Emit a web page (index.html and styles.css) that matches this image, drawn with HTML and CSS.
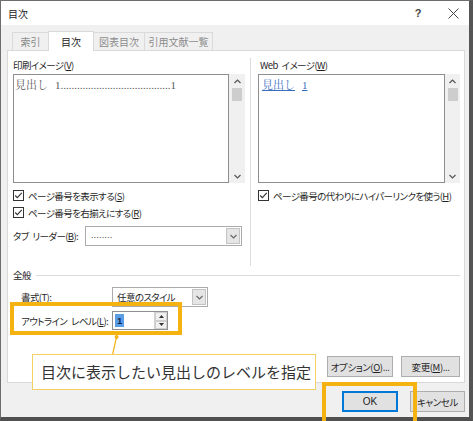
FILE: index.html
```html
<!DOCTYPE html>
<html lang="ja">
<head>
<meta charset="utf-8">
<title>目次</title>
<link rel="stylesheet" href="styles.css">
</head>
<body>
<div class="screen">
  <div class="window">
    <div class="titlebar">
      <span class="title">目次</span>
      <span class="tb-btn help">?</span>
      <span class="tb-btn close"><svg width="11" height="11" viewBox="0 0 11 11"><path d="M0.5 0.5 L10.5 10.5 M10.5 0.5 L0.5 10.5" stroke="#444" stroke-width="1"/></svg></span>
    </div>
    <div class="body">
      <div class="tabs">
        <div class="tab t1">索引</div>
        <div class="tab t2 active">目次</div>
        <div class="tab t3">図表目次</div>
        <div class="tab t4">引用文献一覧</div>
      </div>
      <div class="panel">
        <div class="columns">
          <div class="col col-left">
            <div class="label">印刷イメージ(<u>V</u>)</div>
            <div class="preview">
              <div class="preview-box"><span class="print-line">見出し<span class="sp"></span>1........................................1</span></div>
              <div class="scrollbar sb-left">
                <span class="sb-arrow"><svg width="7" height="5" viewBox="0 0 7 5"><path d="M0.5 4 L3.5 1 L6.5 4" fill="none" stroke="#555" stroke-width="1.2"/></svg></span>
                <span class="sb-thumb"></span>
                <span class="sb-space"></span>
                <span class="sb-arrow"><svg width="7" height="5" viewBox="0 0 7 5"><path d="M0.5 1 L3.5 4 L6.5 1" fill="none" stroke="#555" stroke-width="1.2"/></svg></span>
              </div>
            </div>
            <div class="check first">
              <svg class="cb" width="11" height="11" viewBox="0 0 11 11"><rect x="0.5" y="0.5" width="10" height="10" fill="#fff" stroke="#333"/><path d="M2.2 5.5 L4.3 7.7 L8.8 2.8" fill="none" stroke="#333" stroke-width="1.1"/></svg>
              <span>ページ番号を表示する(<u>S</u>)</span>
            </div>
            <div class="check">
              <svg class="cb" width="11" height="11" viewBox="0 0 11 11"><rect x="0.5" y="0.5" width="10" height="10" fill="#fff" stroke="#333"/><path d="M2.2 5.5 L4.3 7.7 L8.8 2.8" fill="none" stroke="#333" stroke-width="1.1"/></svg>
              <span>ページ番号を右揃えにする(<u>R</u>)</span>
            </div>
            <div class="leader-row">
              <span class="leader-label">タブ<span class="gap"></span>リーダー(<u>B</u>):</span>
              <div class="select leader-select">
                <span class="select-text dots">........</span>
                <span class="select-btn"><svg width="7" height="5" viewBox="0 0 7 5"><path d="M0.5 1 L3.5 4 L6.5 1" fill="none" stroke="#666" stroke-width="1.1"/></svg></span>
              </div>
            </div>
          </div>
          <div class="divider"></div>
          <div class="col col-right">
            <div class="label web-label">Web<span class="gap"></span>イメージ(<u>W</u>)</div>
            <div class="preview">
              <div class="preview-box"><span class="web-link">見出し<span class="sp"></span>1</span></div>
              <div class="scrollbar sb-right">
                <span class="sb-arrow"><svg width="7" height="5" viewBox="0 0 7 5"><path d="M0.5 4 L3.5 1 L6.5 4" fill="none" stroke="#555" stroke-width="1.2"/></svg></span>
                <span class="sb-thumb"></span>
                <span class="sb-space"></span>
                <span class="sb-arrow"><svg width="7" height="5" viewBox="0 0 7 5"><path d="M0.5 1 L3.5 4 L6.5 1" fill="none" stroke="#555" stroke-width="1.2"/></svg></span>
              </div>
            </div>
            <div class="check first">
              <svg class="cb" width="11" height="11" viewBox="0 0 11 11"><rect x="0.5" y="0.5" width="10" height="10" fill="#fff" stroke="#333"/><path d="M2.2 5.5 L4.3 7.7 L8.8 2.8" fill="none" stroke="#333" stroke-width="1.1"/></svg>
              <span>ページ番号の代わりにハイパーリンクを使う(<u>H</u>)</span>
            </div>
          </div>
        </div>
        <div class="group-head"><span>全般</span><span class="rule"></span></div>
        <div class="form-row row-format">
          <span class="flabel">書式(<u>T</u>):</span>
          <div class="select format-select">
            <span class="select-text">任意のスタイル</span>
            <span class="select-btn"><svg width="7" height="5" viewBox="0 0 7 5"><path d="M0.5 1 L3.5 4 L6.5 1" fill="none" stroke="#666" stroke-width="1.1"/></svg></span>
          </div>
        </div>
        <div class="form-row row-level">
          <span class="flabel">アウトライン<span class="gap"></span>レベル(<u>L</u>):</span>
          <div class="spin">
            <span class="spin-text"><span class="sel">1</span></span>
            <span class="spin-btns">
              <span class="spin-btn"><svg width="5" height="3" viewBox="0 0 5 3"><path d="M0 3 L2.5 0 L5 3Z" fill="#333"/></svg></span>
              <span class="spin-btn"><svg width="5" height="3" viewBox="0 0 5 3"><path d="M0 0 L2.5 3 L5 0Z" fill="#333"/></svg></span>
            </span>
          </div>
        </div>
        <div class="panel-buttons">
          <button class="btn btn-options">オプション(<u>O</u>)...</button>
          <button class="btn btn-modify">変更(<u>M</u>)...</button>
        </div>
      </div>
      <div class="footer">
        <button class="btn btn-ok">OK</button>
        <button class="btn btn-cancel">キャンセル</button>
      </div>
    </div>
  </div>

  <div class="hl hl-outline"></div>
  <div class="hl hl-ok"></div>
  <svg class="connector" width="14" height="22" viewBox="0 0 14 22"><path d="M8.5 3 L4.5 21" stroke="#f4b218" stroke-width="1.2"/><circle cx="8.6" cy="3" r="2" fill="#f4b218"/></svg>
  <div class="callout">目次に表示したい見出しのレベルを指定</div>
</div>
</body>
</html>
```
FILE: styles.css
```css
* { box-sizing: border-box; }
html, body { margin: 0; padding: 0; }
body {
  width: 473px;
  height: 421px;
  overflow: hidden;
  background: #f0f0f0;
  font-family: "Noto Sans CJK JP", "Liberation Sans", sans-serif;
  font-size: 10px;
  color: #1f1f1f;
  font-feature-settings: "palt";
}
u { text-decoration: underline; text-underline-offset: 1px; }

.screen { position: relative; width: 473px; height: 421px; overflow: hidden; }

.window {
  width: 473px;
  height: 421px;
  border-top: 1px solid #6d6d6d;
  border-left: 1px solid #6d6d6d;
  border-right: 4px solid #555;
  border-bottom: 4px solid #505050;
  display: flex;
  flex-direction: column;
  background: #f0f0f0;
}

.titlebar {
  height: 24px;
  flex: none;
  background: #fff;
  display: flex;
  align-items: center;
  padding-left: 7px;
}
.title { flex: 1; font-size: 10px; color: #222; }
.tb-btn { width: 32px; height: 24px; display: flex; align-items: center; justify-content: center; color: #333; }
.help { margin-right: 3px; font-family: "Liberation Sans", sans-serif; font-size: 11px; font-weight: bold; color: #444; }

.body {
  flex: 1;
  display: flex;
  flex-direction: column;
  padding: 6px 4px 0 6px;
}

.tabs {
  display: flex;
  align-items: flex-end;
  height: 19px;
  margin-left: 5px;
  flex: none;
}
.tab {
  height: 18px;
  border: 1px solid #dadada;
  border-bottom: none;
  background: #f0f0f0;
  color: #8c8c8c;
  text-align: center;
  line-height: 17px;
  margin-right: -1px;
}
.tab.active {
  height: 20px;
  margin-bottom: -1px;
  background: #fff;
  color: #222;
  position: relative;
  z-index: 2;
  line-height: 19px;
  border-color: #d9d9d9;
}
.t1 { width: 37px; }
.t2 { width: 46px; }
.t3 { width: 52px; }
.t4 { width: 69px; }

.panel {
  flex: none;
  width: 458px;
  height: 333px;
  background: #fff;
  border: 1px solid #d9d9d9;
  padding: 7px 4px 0 5px;
  position: relative;
  z-index: 1;
  font-size: 9.5px;
  letter-spacing: -0.6px;
}
.gap { display: inline-block; width: 4px; }

.columns { display: flex; height: 208px; }
.col-left { width: 232px; }
.divider { width: 1px; margin-left: 5px; background: #dcdcdc; }
.col-right { width: 202px; margin-left: 7px; }

.label { height: 16px; line-height: 15px; white-space: nowrap; }
.web-label { padding-left: 2px; }

.preview { display: flex; height: 109px; }
.preview-box {
  flex: 1;
  border: 1px solid #8e8e8e;
  background: #fff;
  padding: 2px 1px;
  line-height: 16px;
  white-space: nowrap;
  overflow: hidden;
  letter-spacing: 0;
}
.print-line {
  font-family: "Liberation Serif", "Noto Serif CJK JP", "Noto Sans CJK JP", serif;
  font-size: 11px;
  color: #5a5a5a;
  font-feature-settings: normal;
}
.sp { display: inline-block; width: 7px; }
.web-link {
  font-family: "Liberation Serif", "Noto Serif CJK JP", "Noto Sans CJK JP", serif;
  font-size: 11px;
  color: #3a6fbf;
  text-decoration: underline;
  font-feature-settings: normal;
  padding-left: 2px;
}

.scrollbar {
  display: flex;
  flex-direction: column;
  align-items: center;
  background: #f0f0f0;
}
.sb-left { width: 16px; }
.sb-right { width: 15px; }
.sb-arrow { height: 14px; display: flex; align-items: center; justify-content: center; }
.sb-thumb { width: 10px; height: 13px; background: #cdcdcd; }
.sb-space { flex: 1; }

.check { display: flex; align-items: center; height: 17px; white-space: nowrap; }
.check.first { margin-top: 4px; }
.cb { flex: none; margin-right: 4px; }

.leader-row { display: flex; align-items: center; height: 20px; margin-top: 5px; }
.leader-label { width: 72px; white-space: nowrap; }

.select {
  display: flex;
  align-items: stretch;
  border: 1px solid #ababab;
  background: #fff;
  height: 20px;
}
.select-text { flex: 1; padding-left: 4px; line-height: 18px; white-space: nowrap; overflow: hidden; }
.dots { font-size: 8px; letter-spacing: 0.5px; color: #444; padding-left: 5px; line-height: 16px; }
.select-btn {
  width: 14px;
  margin: 1px;
  background: #e5e5e5;
  border: 1px solid #c3c3c3;
  display: flex;
  align-items: center;
  justify-content: center;
}
.leader-select { width: 157px; }
.format-select { width: 96px; }

.group-head { display: flex; align-items: center; height: 14px; margin-top: 2px; }
.rule { flex: 1; height: 1px; background: #dcdcdc; margin-left: 5px; }

.form-row { display: flex; align-items: center; padding-left: 8px; white-space: nowrap; }
.flabel { width: 91px; }
.row-format { margin-top: 5px; height: 20px; }
.row-level { margin-top: 4px; height: 19px; }

.spin {
  display: flex;
  width: 56px;
  height: 19px;
  border: 1px solid #8f8f8f;
  background: #fff;
}
.spin-text { flex: 1; padding-left: 2px; display: flex; align-items: center; }
.sel { background: #5b9de3; color: #0d2a55; line-height: 13px; padding: 0 2px; font-family: "Liberation Sans", sans-serif; font-weight: bold; letter-spacing: 0; }
.spin-btns { width: 13px; display: flex; flex-direction: column; border-left: 1px solid #d0d0d0; }
.spin-btn { flex: 1; display: flex; align-items: center; justify-content: center; background: #f0f0f0; border: 1px solid #cfcfcf; }

.panel-buttons { display: flex; justify-content: flex-end; gap: 8px; margin-top: 26px; }
.btn {
  height: 21px;
  padding: 0;
  font-family: inherit;
  font-size: 9.5px;
  letter-spacing: -0.4px;
  color: #1f1f1f;
  background: #e1e1e1;
  border: 1px solid #adadad;
  font-feature-settings: "palt";
  white-space: nowrap;
}
.btn-options { width: 66px; }
.btn-modify { width: 59px; }

.footer { display: flex; justify-content: flex-end; gap: 12px; margin-top: 8px; }
.btn-ok { width: 56px; border: 1px solid #0078d7; box-shadow: inset 0 0 0 1px #0078d7; font-family: "Liberation Sans", sans-serif; font-size: 10px; letter-spacing: 0; }
.btn-cancel { width: 55px; }

.hl { position: absolute; z-index: 10; border: 4px solid #f5b312; }
.hl-outline { left: 10px; top: 302px; width: 172px; height: 33px; }
.hl-ok { left: 322px; top: 382px; width: 95px; height: 50px; }

.connector { position: absolute; z-index: 10; left: 108px; top: 334px; }

.callout {
  position: absolute;
  z-index: 11;
  left: 32px;
  top: 354px;
  width: 284px;
  height: 36px;
  background: #fff;
  border: 1px solid #f5d066;
  padding-left: 8px;
  font-size: 15px;
  line-height: 34px;
  color: #333;
  font-feature-settings: normal;
  white-space: nowrap;
}
```
